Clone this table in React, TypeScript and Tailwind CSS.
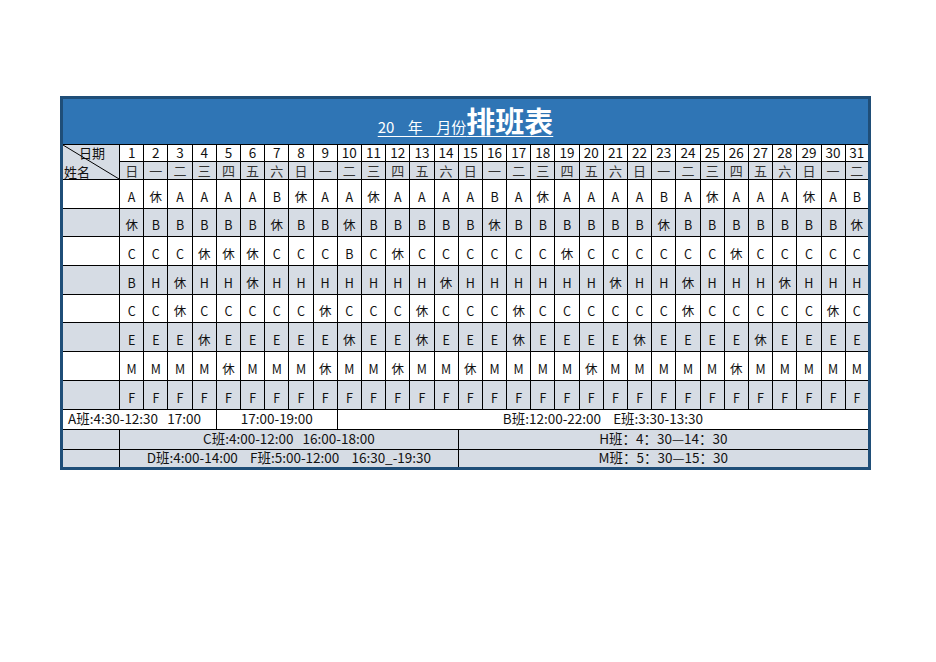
const weekdays = ["日", "一", "二", "三", "四", "五", "六"];

const rows = [
  "A 休 A A A A B 休 A A 休 A A A A B A 休 A A A A B A 休 A A A 休 A B",
  "休 B B B B B 休 B B 休 B B B B B 休 B B B B B B 休 B B B B B B B 休",
  "C C C 休 休 休 C C C B C 休 C C C C C C 休 C C C C C C 休 C C C C C",
  "B H 休 H H 休 H H H H H H H 休 H H H H H H 休 H H 休 H H H 休 H H H",
  "C C 休 C C C C C 休 C C C 休 C C C 休 C C C C C C 休 C C C C C 休 C",
  "E E E 休 E E E E E 休 E E 休 E E E 休 E E E E 休 E E E E 休 E E E E",
  "M M M M 休 M M M 休 M M 休 M M 休 M M M M 休 M M M M M 休 M M M M M",
  "F F F F F F F F F F F F F F F F F F F F F F F F F F F F F F F",
].map((r) => r.split(" "));

const days = Array.from({ length: 31 }, (_, i) => i + 1);

export default function App() {
  return (
    <div className="min-h-screen bg-white pt-[96px] pl-[60px] font-['Noto_Sans_CJK_SC',sans-serif] text-[#111]">
      <table className="table-fixed border-collapse border-[3px] border-[#1f4e78] w-[811px]">
        <colgroup>
          <col className="w-[58px]" />
          {days.map((d) => (
            <col key={d} className="w-[24.16px]" />
          ))}
        </colgroup>
        <tbody>
          {/* title band */}
          <tr>
            <td colSpan={32} className="h-[47px] bg-[#2f75b5] border-b border-black text-center align-bottom pb-[6px]">
              <span className="text-white underline underline-offset-[3px] decoration-1 whitespace-pre">
                <span className="text-[15px]">20    年    月份</span>
                <span className="text-[29px] font-bold leading-none">排班表</span>
              </span>
            </td>
          </tr>

          {/* date header */}
          <tr>
            <td rowSpan={2} className="relative border border-black bg-[#d6dce4] p-0 text-[13px] leading-none">
              <svg className="absolute inset-0 w-full h-full" preserveAspectRatio="none" viewBox="0 0 100 100">
                <line x1="0" y1="0" x2="100" y2="100" stroke="black" strokeWidth="1" vectorEffect="non-scaling-stroke" />
              </svg>
              <div className="flex flex-col h-[34px] justify-between">
                <span className="self-end pr-[14px] pt-[1px]">日期</span>
                <span className="self-start pl-[1px] pb-[1px]">姓名</span>
              </div>
            </td>
            {days.map((d) => (
              <td key={d} className="h-[17px] border border-black bg-white text-center text-[13.5px] leading-none p-0">
                {d}
              </td>
            ))}
          </tr>
          <tr>
            {days.map((d) => (
              <td key={d} className="h-[18px] border border-black bg-[#d6dce4] text-center text-[13px] leading-none p-0 text-[#333]">
                {weekdays[(d - 1) % 7]}
              </td>
            ))}
          </tr>

          {/* shifts */}
          {rows.map((r, i) => {
            const bg = i % 2 === 0 ? "bg-white" : "bg-[#d6dce4]";
            return (
              <tr key={i}>
                <td className={`h-[28.7px] border border-black ${bg}`} />
                {r.map((s, j) => (
                  <td key={j} className={`h-[28.7px] border border-black ${bg} text-center align-bottom pb-[3px] text-[12.5px] leading-[16px] p-0`}>
                    {s}
                  </td>
                ))}
              </tr>
            );
          })}

          {/* legend */}
          <tr>
            <td colSpan={5} className="h-[20px] border border-black bg-white text-[13.5px] leading-none pl-[5px] whitespace-pre">
              A班:4:30-12:30   17:00
            </td>
            <td colSpan={5} className="h-[20px] border border-black bg-white text-[13.5px] leading-none text-center">
              17:00-19:00
            </td>
            <td colSpan={22} className="h-[20px] border border-black bg-white text-[13.5px] leading-none text-center whitespace-pre">
              B班:12:00-22:00    E班:3:30-13:30
            </td>
          </tr>
          <tr>
            <td className="h-[20px] border border-black bg-[#d6dce4]" />
            <td colSpan={14} className="h-[20px] border border-black bg-[#d6dce4] text-[13.5px] leading-none text-center whitespace-pre">
              C班:4:00-12:00   16:00-18:00
            </td>
            <td colSpan={17} className="h-[20px] border border-black bg-[#d6dce4] text-[13.5px] leading-none text-center">
              H班：4：30—14：30
            </td>
          </tr>
          <tr>
            <td className="h-[19px] border border-black bg-[#d6dce4]" />
            <td colSpan={14} className="h-[19px] border border-black bg-[#d6dce4] text-[13.5px] leading-none text-center whitespace-pre">
              D班:4:00-14:00    F班:5:00-12:00    16:30_-19:30
            </td>
            <td colSpan={17} className="h-[19px] border border-black bg-[#d6dce4] text-[13.5px] leading-none text-center">
              M班：5：30—15：30
            </td>
          </tr>
        </tbody>
      </table>
    </div>
  );
}
